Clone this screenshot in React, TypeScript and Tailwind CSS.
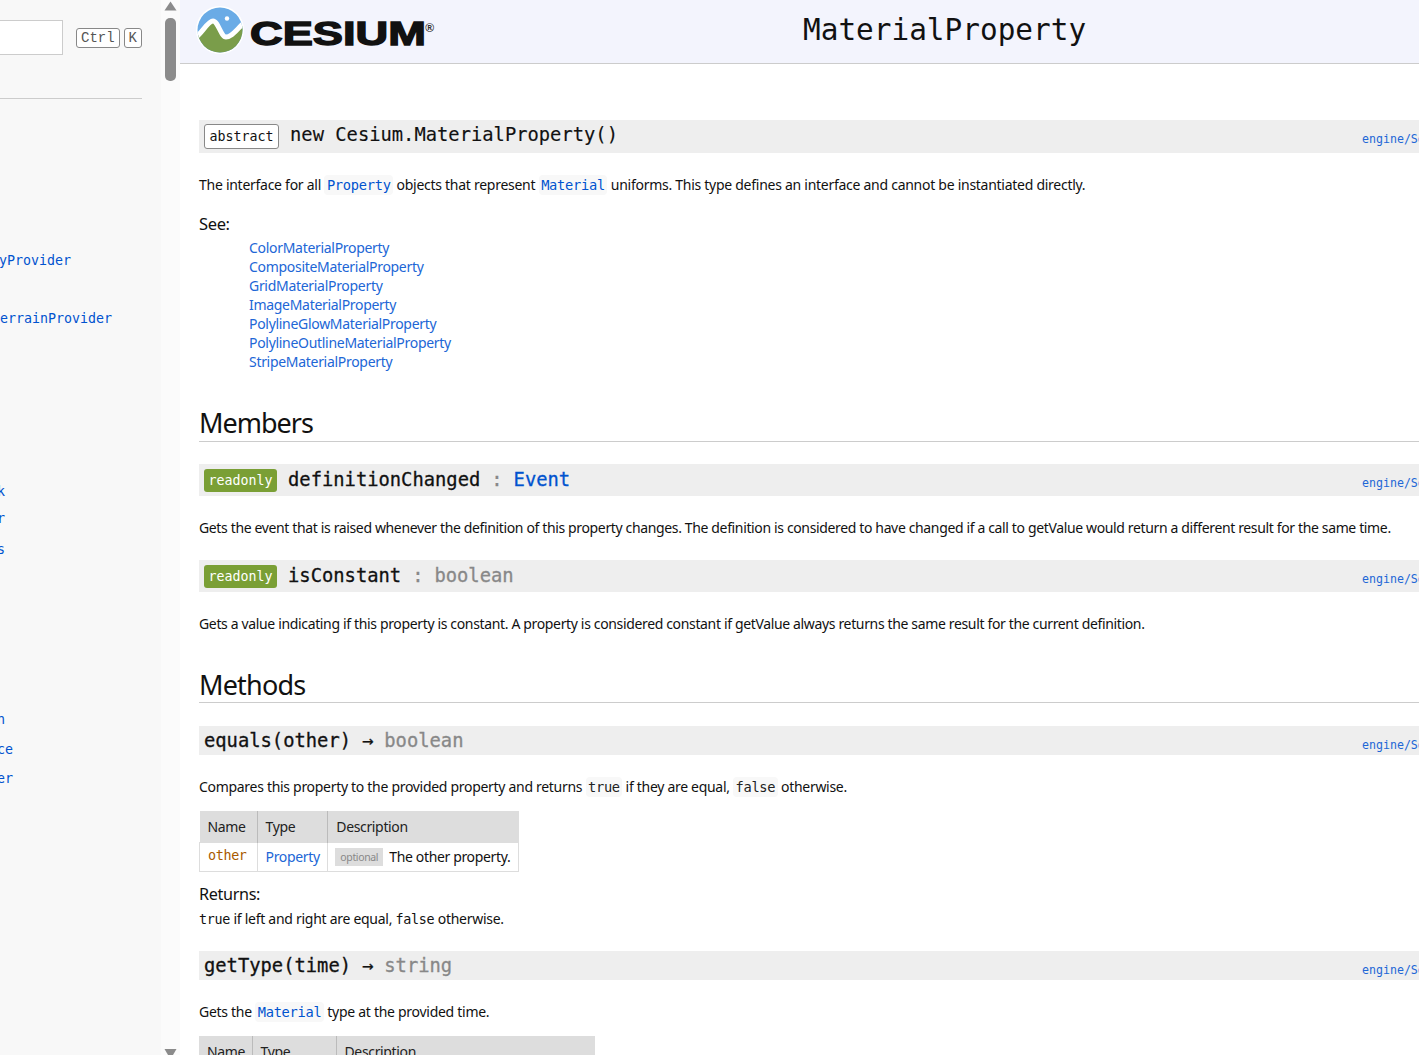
const mono = "font-['DejaVu_Sans_Mono','Liberation_Mono',monospace]";
const linkColor = 'text-[#0053cf]';

const seeAlso = [
  'ColorMaterialProperty',
  'CompositeMaterialProperty',
  'GridMaterialProperty',
  'ImageMaterialProperty',
  'PolylineGlowMaterialProperty',
  'PolylineOutlineMaterialProperty',
  'StripeMaterialProperty',
];

// the sidebar is scrolled sideways in the shot, so only the tails of the names show
const sidebarItems = [
  { text: 'yProvider', className: '-ml-[1px] mt-[153px]' },
  { text: 'errainProvider', className: 'mt-[40px]' },
  { text: 'k', className: '-ml-[3px] mt-[155px]' },
  { text: 'r', className: '-ml-[3px] mt-[9px]' },
  { text: 's', className: '-ml-[3px] mt-[13px]' },
  { text: 'n', className: '-ml-[3px] mt-[152px]' },
  { text: 'ce', className: '-ml-[3px] mt-[12px]' },
  { text: 'er', className: '-ml-[3px] mt-[11px]' },
];

function Kbd({ children }: { children: string }) {
  return (
    <span className="h-[20px] px-[4px] flex items-center border border-[#888] rounded-[3px] font-['Liberation_Mono',monospace] text-[14px] text-[#555] bg-white">
      {children}
    </span>
  );
}

function Sidebar() {
  return (
    <aside className="w-[161px] shrink-0 bg-[#f8f8f8] overflow-hidden">
      <div className="flex items-center h-[35px] mt-[20px]">
        <div className="w-[63px] h-[35px] bg-white border border-[#ccc] border-l-0" />
        <div className="flex gap-[4px] ml-[13px] mt-[1px]">
          <Kbd>Ctrl</Kbd>
          <Kbd>K</Kbd>
        </div>
      </div>
      <div className="w-[142px] h-px bg-[#ccc] mt-[43px]" />
      <ul className={`${mono} text-[13.3px] leading-[18px] ${linkColor}`}>
        {sidebarItems.map(item => (
          <li key={item.text} className={item.className}>{item.text}</li>
        ))}
      </ul>
    </aside>
  );
}

function Scrollbar() {
  return (
    <div className="w-[19px] shrink-0 bg-[#fbfbfb] flex flex-col items-center justify-between">
      <div className="flex flex-col items-center w-full">
        <svg width="13" height="10" viewBox="0 0 13 10" className="mt-px">
          <path d="M6.5 0.5 L12.5 9.5 L0.5 9.5 Z" fill="#8b8b8b" />
        </svg>
        <div className="w-[11px] h-[63px] rounded-[5px] bg-[#8b8b8b] mt-[7px]" />
      </div>
      <svg width="13" height="6" viewBox="0 0 13 6">
        <path d="M0.5 0 L12.5 0 L9 6 L4 6 Z" fill="#8b8b8b" />
      </svg>
    </div>
  );
}

function Logo() {
  return (
    <div className="flex items-center">
      <svg width="48" height="48" viewBox="0 0 48 48" className="shrink-0">
        <defs>
          <clipPath id="logoDisc">
            <circle cx="24" cy="24" r="22.5" />
          </clipPath>
        </defs>
        <circle cx="24" cy="24" r="24" fill="#fff" />
        <g clipPath="url(#logoDisc)">
          <rect x="0" y="0" width="48" height="48" fill="#6aabe6" />
          <path d="M0 31 C6 27 12 15 17 15 C22 15 25 31 30 31 C36 31 40 24 48 17 L48 48 L0 48 Z" fill="#7a9d4a" />
          <path
            d="M0 31 C6 27 12 15 17 15 C22 15 25 31 30 31 C36 31 40 24 48 17"
            fill="none"
            stroke="#fff"
            strokeWidth="5"
            strokeLinejoin="round"
          />
        </g>
        <circle cx="31" cy="12.5" r="2.2" fill="#fff" />
      </svg>
      <span className="ml-[6px] mt-[7px] font-['Liberation_Sans',sans-serif] font-bold text-[34px] leading-none text-[#111] [-webkit-text-stroke:1.4px_#111] [transform:scaleX(1.33)] origin-left">
        CESIUM
      </span>
      <span className="ml-[43px] mb-[4px] font-['Liberation_Sans',sans-serif] font-bold text-[12px] text-[#333]">®</span>
    </div>
  );
}

function Header() {
  return (
    <header className="h-[64px] bg-[#f3f4fd] border-b border-[#ccc] flex items-center relative pl-[16px] pb-[4px]">
      <Logo />
      <h1 className={`${mono} absolute left-[623px] top-[11px] text-[29.4px] leading-[38px] text-[#111]`}>MaterialProperty</h1>
    </header>
  );
}

function SourceLink() {
  return (
    <a className={`${mono} self-start ml-auto w-[57px] shrink-0 overflow-hidden whitespace-nowrap text-[11.6px] leading-[16px] mt-[11px] text-[#2166d6] [-webkit-text-stroke:0px]`}>
      engine/Source/DataSources/MaterialProperty.js
    </a>
  );
}

function Readonly() {
  return (
    <span className={`${mono} bg-[#7a9f35] text-white text-[13.3px] leading-[23px] h-[23px] px-[4.5px] rounded-[3px] mr-[11px] [-webkit-text-stroke:0px]`}>
      readonly
    </span>
  );
}

function Signature({ className, children }: { className: string; children: React.ReactNode }) {
  return (
    <div className={`flex items-center bg-[#eee] pl-[5px] ${mono} text-[18.8px] text-[#111] tracking-normal [-webkit-text-stroke:0.3px] ${className}`}>
      {children}
      <SourceLink />
    </div>
  );
}

function Code({ children, link }: { children: string; link?: boolean }) {
  return (
    <code className={`${mono} text-[13.7px] bg-[#f8f8f8] rounded-[4px] px-[2.5px] py-[2px] ${link ? linkColor : 'text-[#222]'}`}>
      {children}
    </code>
  );
}

function ParamTable({ className, widths, children }: { className: string; widths: string[]; children?: React.ReactNode }) {
  return (
    <table className={`border-collapse text-[14px] ${className}`}>
      <thead>
        <tr className="bg-[#ddd] h-[31px] text-[#222]">
          {['Name', 'Type', 'Description'].map((h, i) => (
            <th key={h} className={`font-normal text-left pl-[8px] border-l border-[#bbb] first:border-l-0 ${widths[i]}`}>{h}</th>
          ))}
        </tr>
      </thead>
      {children}
    </table>
  );
}

function Content() {
  return (
    <div className="pl-[19px] font-['Noto_Sans',sans-serif] text-[14px] text-[#111] tracking-[-0.35px]">
      <Signature className="h-[33px] mt-[56px] [-webkit-text-stroke:0.15px]">
        <span className="border border-[#888] bg-white rounded-[3px] text-[13.3px] leading-[23px] h-[25px] px-[4.5px] mr-[11px] [-webkit-text-stroke:0px]">abstract</span>
        <span className="-mt-[2px]">new Cesium.MaterialProperty()</span>
      </Signature>

      <p className="mt-[21px] leading-[22px] tracking-[-0.27px]">
        The interface for all <Code link>Property</Code> objects that represent <Code link>Material</Code> uniforms. This type defines an interface and cannot be instantiated directly.
      </p>

      <h5 className="text-[16.5px] leading-[22px] mt-[17px]">See:</h5>
      <ul className="mt-[3px] ml-[50px] text-[#2166d6] leading-[19px] tracking-[-0.3px]">
        {seeAlso.map(name => <li key={name}>{name}</li>)}
      </ul>

      <h3 className="text-[27px] leading-[36px] tracking-[-1px] mt-[34px] border-b border-[#ccc] h-[37px]">Members</h3>

      <Signature className="h-[32px] mt-[22px]">
        <Readonly />
        <span>definitionChanged</span>
        <span className="text-[#888] mx-[11px]">:</span>
        <span className={linkColor}>Event</span>
      </Signature>
      <p className="mt-[21px] leading-[22px] tracking-[-0.36px]">
        Gets the event that is raised whenever the definition of this property changes. The definition is considered to have changed if a call to getValue would return a different result for the same time.
      </p>

      <Signature className="h-[32px] mt-[21px]">
        <Readonly />
        <span>isConstant</span>
        <span className="text-[#888] mx-[11px]">:</span>
        <span className="text-[#888]">boolean</span>
      </Signature>
      <p className="mt-[21px] leading-[22px]">
        Gets a value indicating if this property is constant. A property is considered constant if getValue always returns the same result for the current definition.
      </p>

      <h3 className="text-[27px] leading-[36px] tracking-[-0.8px] mt-[28px] border-b border-[#ccc] h-[40px] pt-[4px]">Methods</h3>

      <Signature className="h-[29px] mt-[23px] [&>span]:mt-[2px]">
        <span>equals(other)</span>
        <span className="mx-[11px]">→</span>
        <span className="text-[#888]">boolean</span>
      </Signature>
      <p className="mt-[21px] leading-[22px] tracking-[-0.3px]">
        Compares this property to the provided property and returns <Code>true</Code> if they are equal, <Code>false</Code> otherwise.
      </p>

      <ParamTable className="mt-[13px] w-[320px]" widths={['w-[58px]', 'w-[71px]', 'w-[191px]']}>
        <tbody>
          <tr className="h-[29px] border border-[#ddd]">
            <td className={`${mono} text-[13.4px] text-[#a85a00] pl-[8px] border-r border-[#ddd]`}>other</td>
            <td className="pl-[8px] border-r border-[#ddd] text-[#2166d6]">Property</td>
            <td className="pl-[7px] whitespace-nowrap">
              <span className="inline-block bg-[#ddd] text-[#888] text-[10.5px] leading-[18px] h-[18px] px-[5px] mr-[6px] align-[1px]">optional</span>
              The other property.
            </td>
          </tr>
        </tbody>
      </ParamTable>

      <h5 className="text-[16.2px] leading-[22px] mt-[11px]">Returns:</h5>
      <p className="mt-[3px] leading-[22px] tracking-[-0.28px]">
        <span className={`${mono} text-[13.4px]`}>true</span> if left and right are equal, <span className={`${mono} text-[13.4px]`}>false</span> otherwise.
      </p>

      <Signature className="h-[29px] mt-[20px] [&>span]:mt-[2px]">
        <span>getType(time)</span>
        <span className="mx-[11px]">→</span>
        <span className="text-[#888]">string</span>
      </Signature>
      <p className="mt-[21px] leading-[22px] tracking-[-0.28px]">
        Gets the <Code link>Material</Code> type at the provided time.
      </p>

      <ParamTable className="mt-[13px] w-[396px]" widths={['w-[53px]', 'w-[84px]', 'w-[259px]']} />
    </div>
  );
}

export default function App() {
  return (
    <div className="flex h-screen w-full overflow-hidden bg-white">
      <Sidebar />
      <Scrollbar />
      <main className="flex-1 min-w-0 overflow-hidden">
        <Header />
        <Content />
      </main>
    </div>
  );
}
